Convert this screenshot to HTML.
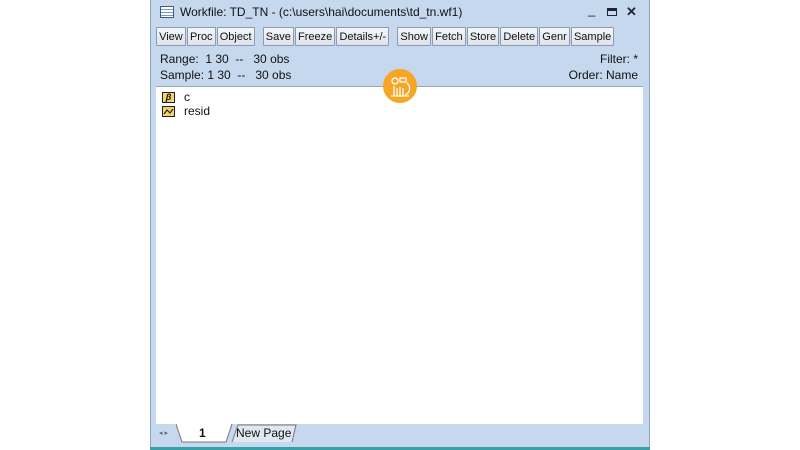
<!DOCTYPE html>
<html><head><meta charset="utf-8"><style>
*{margin:0;padding:0;box-sizing:border-box}
body{width:800px;height:450px;background:#fff;position:relative;overflow:hidden;font-family:"Liberation Sans",sans-serif;font-size:11px;color:#111}
.win{position:absolute;left:150px;top:0;width:500px;height:450px;background:#c5d8ee;border-left:1px solid #8aa3c0;border-right:1px solid #8aa3c0}
.bottom{position:absolute;left:150px;top:447px;width:500px;height:3px;background:#3aa0a8}
.ctl{position:absolute;top:4px;font-size:13px;color:#223}
.tb{position:absolute;left:156px;top:27px;height:20px;display:flex}
.tb span{display:block;height:19px;line-height:18px;padding:0 2.1px;border:1px solid #8a9bb3;border-radius:1px;background:linear-gradient(#f4f6f9,#dde3ea);font-size:11px;color:#111;margin-right:1px}
.gap{width:6px;border:none!important;background:none!important}
.info{position:absolute;font-size:12px;color:#111}
.content{position:absolute;left:156px;top:86px;width:487px;height:338px;background:#fff;border-top:1px solid #9aaabb}
.ic{position:absolute;width:13px;height:11px;border:1px solid #222;background:#f6d36a}
.tabs{position:absolute;left:156px;top:424px;width:487px;height:19px}
.badge{position:absolute;left:383px;top:69px;width:34px;height:34px;border-radius:50%;background:#f6a623}
</style></head><body>
<div class="win"></div>
<div class="bottom"></div>
<div style="position:absolute;left:160px;top:6px;width:14px;height:12px;border:1px solid #3a5a88;background:repeating-linear-gradient(#fff 0 2px,#7a9ac4 2px 3px)"></div>
<div style="position:absolute;left:180px;top:5px;font-size:12px">Workfile: TD_TN - (c:\users\hai\documents\td_tn.wf1)</div>
<div class="ctl" style="left:588px;top:2px">_</div>
<div style="position:absolute;left:607px;top:8px;width:10px;height:8px;border:1px solid #223;border-top-width:3px"></div>
<div class="ctl" style="left:626px;top:4px;font-weight:bold">✕</div>
<div class="tb">
<span>View</span><span>Proc</span><span>Object</span><span class="gap"></span>
<span>Save</span><span>Freeze</span><span>Details+/-</span><span class="gap"></span>
<span>Show</span><span>Fetch</span><span>Store</span><span>Delete</span><span>Genr</span><span>Sample</span>
</div>
<div class="info" style="left:160px;top:52px">Range:&nbsp; 1 30 &nbsp;--&nbsp;&nbsp; 30 obs</div>
<div class="info" style="left:160px;top:68px">Sample: 1 30 &nbsp;--&nbsp;&nbsp; 30 obs</div>
<div class="info" style="right:162px;top:52px">Filter: *</div>
<div class="info" style="right:162px;top:68px">Order: Name</div>
<div class="content">
<div class="ic" style="left:6px;top:5px;font-size:9px;line-height:9px;text-align:center;font-style:italic;font-weight:bold">β</div>
<div style="position:absolute;left:28px;top:3px;font-size:12px">c</div>
<div class="ic" style="left:6px;top:19px"><svg width="11" height="9" style="position:absolute;left:0;top:0"><path d="M1 7 L4 3 L7 6 L10 2" stroke="#222" fill="none" stroke-width="1.2"/></svg></div>
<div style="position:absolute;left:28px;top:17px;font-size:12px">resid</div>
</div>
<div class="badge"><svg width="34" height="34"><g stroke="#fff" fill="none" stroke-width="1.3"><circle cx="12" cy="12" r="3"/><rect x="17" y="9" width="6" height="4"/><path d="M11 17v10M14 19v8M17 18v9M20 19v8M8 27h18M24 14a7 7 0 0 1-2 12"/></g></svg></div>
<div class="tabs">
<div style="position:absolute;left:3px;top:5px;font-size:7px;color:#666">◂ ▸</div>
<svg width="160" height="19" style="position:absolute;left:20px;top:0"><path d="M0 0 L6 18 L50 18 L56 0" fill="#fff" stroke="#777"/><path d="M56 18 L62 1 L120 1 L116 18" fill="#dfe7f1" stroke="#777"/></svg>
<div style="position:absolute;left:43px;top:2px;font-weight:bold;font-size:12px">1</div>
<div style="position:absolute;left:80px;top:2px;font-size:12px">New Page</div>
</div>
</body></html>
